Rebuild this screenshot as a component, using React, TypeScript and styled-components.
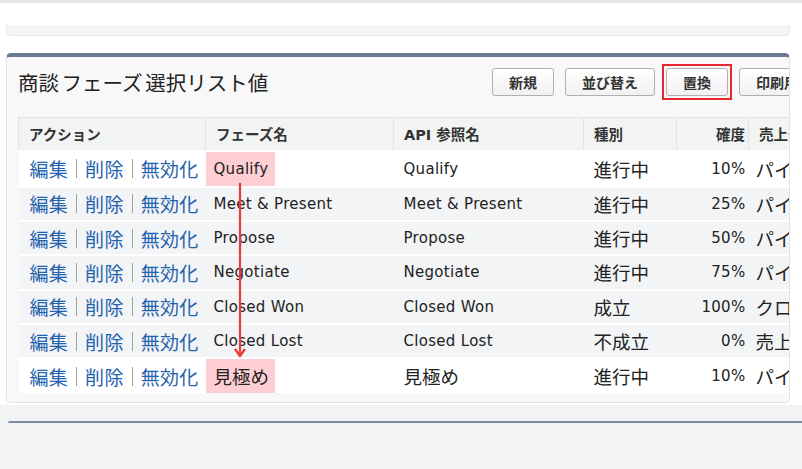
import React from 'react'
import styled, { createGlobalStyle } from 'styled-components'

const GlobalStyle = createGlobalStyle`
  html, body {
    margin: 0;
    padding: 0;
    background: #ffffff;
    font-family: "Noto Sans CJK JP", "DejaVu Sans", sans-serif;
    color: #333;
  }
`

const Page = styled.div`
  width: 802px;
  height: 469px;
  overflow: hidden;
  display: flex;
  flex-direction: column;
  background: #ffffff;
`

const TopStrip = styled.div`
  height: 3px;
  background: #e4e6e9;
`

const PrevCard = styled.div`
  margin: 0 12px 0 6px;
  padding-top: 22px;
`

const PrevCardFoot = styled.div`
  height: 10px;
  background: #f5f5f6;
  border: 1px solid #e6e6e8;
  border-top: none;
  border-radius: 0 0 5px 5px;
`

const Card = styled.div`
  margin: 17px 12px 0 6px;
  background: #f8f8f9;
  border: 1px solid #e2e3e5;
  border-top: 4px solid #6a7a94;
  border-radius: 5px;
  overflow: hidden;
  padding-bottom: 9px;
`

const CardHead = styled.div`
  display: grid;
  grid-template-columns: 474px 1fr;
  align-items: center;
  height: 49px;
  padding: 0 0 11px 11px;
`

const Title = styled.h2`
  margin: 0;
  font-size: 20.5px;
  line-height: 28px;
  font-weight: 400;
  color: #222;
  white-space: nowrap;
  word-spacing: -2px;
`

const Buttons = styled.div`
  display: flex;
  align-items: center;
  gap: 11px;
  white-space: nowrap;
`

const Button = styled.button`
  height: 28px;
  padding: 0 16px;
  border: 1px solid #b0b0b0;
  border-radius: 3px;
  background: linear-gradient(#ffffff, #f1f1f1);
  font-family: "Noto Sans CJK JP", sans-serif;
  font-size: 14px;
  font-weight: 700;
  color: #333;
  flex-shrink: 0;
`

const Highlight = styled.span`
  display: flex;
  margin: 0 -4px;
  padding: 2px;
  border: 2px solid #e8262b;
  flex-shrink: 0;
`

const TableWrap = styled.div`
  position: relative;
  margin-left: 11px;
  width: 1000px;
`

const Table = styled.table`
  border-collapse: collapse;
  table-layout: fixed;
  width: 1000px;
`

const Th = styled.th<{ w: number; right?: boolean }>`
  width: ${({ w }) => w}px;
  height: 33px;
  box-sizing: border-box;
  padding: 0 ${({ right }) => (right ? '3px' : '10px')};
  background: #f2f3f3;
  border: 1px solid #e0e2e4;
  text-align: ${({ right }) => (right ? 'right' : 'left')};
  font-family: "DejaVu Sans", "Noto Sans CJK JP", sans-serif;
  font-size: 14.5px;
  font-weight: 600;
  color: #333;
  white-space: nowrap;
  overflow: hidden;
`

const Tr = styled.tr<{ shade: boolean }>`
  height: 34.4px;
  background: ${({ shade }) => (shade ? '#f3f4f6' : '#ffffff')};
`

const Td = styled.td<{ jp?: boolean; right?: boolean; pad?: number }>`
  padding: 0 ${({ right }) => (right ? '3px' : '0')} 0
    ${({ pad }) => (pad ?? 10)}px;
  border-top: 2px solid #ffffff;
  text-align: ${({ right }) => (right ? 'right' : 'left')};
  font-family: ${({ jp }) =>
    jp ? '"Noto Sans CJK JP", sans-serif' : '"DejaVu Sans", "Noto Sans CJK JP", sans-serif'};
  font-size: ${({ jp }) => (jp ? '18.5px' : '15px')};
  letter-spacing: ${({ jp }) => (jp ? '0' : '0.3px')};
  color: #222;
  white-space: nowrap;
  overflow: hidden;
  vertical-align: middle;
`

const Links = styled.div`
  display: flex;
  align-items: center;
  font-family: "Noto Sans CJK JP", sans-serif;
  font-size: 19px;
`

const Link = styled.a`
  color: #1f62ad;
  text-decoration: none;
`

const Sep = styled.span`
  display: inline-block;
  width: 1px;
  height: 19px;
  margin: 0 8px;
  background: #a0a0a0;
`

const Mark = styled.span`
  display: flex;
  align-items: center;
  width: 69px;
  height: 34px;
  box-sizing: border-box;
  padding-left: 8px;
  background: #fecfd2;
`

const Arrow = styled.svg`
  position: absolute;
  left: 215px;
  top: 66px;
`

const Bottom = styled.div`
  flex: 1;
  margin-top: 2px;
  background: #f2f3f5;
  padding: 16px 0 0 8px;
`

const NextCardTop = styled.div`
  height: 2px;
  background: #7d8ba3;
  border-radius: 2px 0 0 0;
`

const cols = [
  { label: 'アクション', w: 187 },
  { label: 'フェーズ名', w: 188 },
  { label: 'API 参照名', w: 190 },
  { label: '種別', w: 93 },
  { label: '確度', w: 72, right: true },
  { label: '売上予測分類', w: 270 },
]

const rows = [
  { name: 'Qualify', api: 'Qualify', type: '進行中', prob: '10%', cat: 'パイプライン', mark: true },
  { name: 'Meet & Present', api: 'Meet & Present', type: '進行中', prob: '25%', cat: 'パイプライン' },
  { name: 'Propose', api: 'Propose', type: '進行中', prob: '50%', cat: 'パイプライン' },
  { name: 'Negotiate', api: 'Negotiate', type: '進行中', prob: '75%', cat: 'パイプライン' },
  { name: 'Closed Won', api: 'Closed Won', type: '成立', prob: '100%', cat: 'クローズ' },
  { name: 'Closed Lost', api: 'Closed Lost', type: '不成立', prob: '0%', cat: '売上予測から除外' },
  { name: '見極め', api: '見極め', type: '進行中', prob: '10%', cat: 'パイプライン', mark: true },
]

const isJp = (s: string) => /[^\x00-\x7F]/.test(s)

const App = () => (
  <Page>
    <GlobalStyle />
    <TopStrip />
    <PrevCard>
      <PrevCardFoot />
    </PrevCard>
    <Card>
      <CardHead>
        <Title>商談 フェーズ 選択リスト値</Title>
        <Buttons>
          <Button>新規</Button>
          <Button>並び替え</Button>
          <Highlight>
            <Button>置換</Button>
          </Highlight>
          <Button>印刷用ビュー</Button>
        </Buttons>
      </CardHead>
      <TableWrap>
        <Table>
          <thead>
            <tr>
              {cols.map((c) => (
                <Th key={c.label} w={c.w} right={c.right}>
                  {c.label}
                </Th>
              ))}
            </tr>
          </thead>
          <tbody>
            {rows.map((r, i) => (
              <Tr key={r.name} shade={i > 0 && i < rows.length - 1}>
                <Td pad={11}>
                  <Links>
                    <Link>編集</Link>
                    <Sep />
                    <Link>削除</Link>
                    <Sep />
                    <Link>無効化</Link>
                  </Links>
                </Td>
                <Td jp={isJp(r.name)} pad={r.mark ? 0 : 8}>
                  {r.mark ? <Mark>{r.name}</Mark> : r.name}
                </Td>
                <Td jp={isJp(r.api)}>{r.api}</Td>
                <Td jp>{r.type}</Td>
                <Td right>{r.prob}</Td>
                <Td jp pad={7}>
                  {r.cat}
                </Td>
              </Tr>
            ))}
          </tbody>
        </Table>
        <Arrow width="14" height="176" viewBox="0 0 14 176">
          <line x1="7" y1="0" x2="7" y2="172" stroke="#f03a3a" strokeWidth="2.2" />
          <polyline
            points="2,166 7,173 12,166"
            fill="none"
            stroke="#f03a3a"
            strokeWidth="2.4"
            strokeLinejoin="round"
          />
        </Arrow>
      </TableWrap>
    </Card>
    <Bottom>
      <NextCardTop />
    </Bottom>
  </Page>
)

export default App
